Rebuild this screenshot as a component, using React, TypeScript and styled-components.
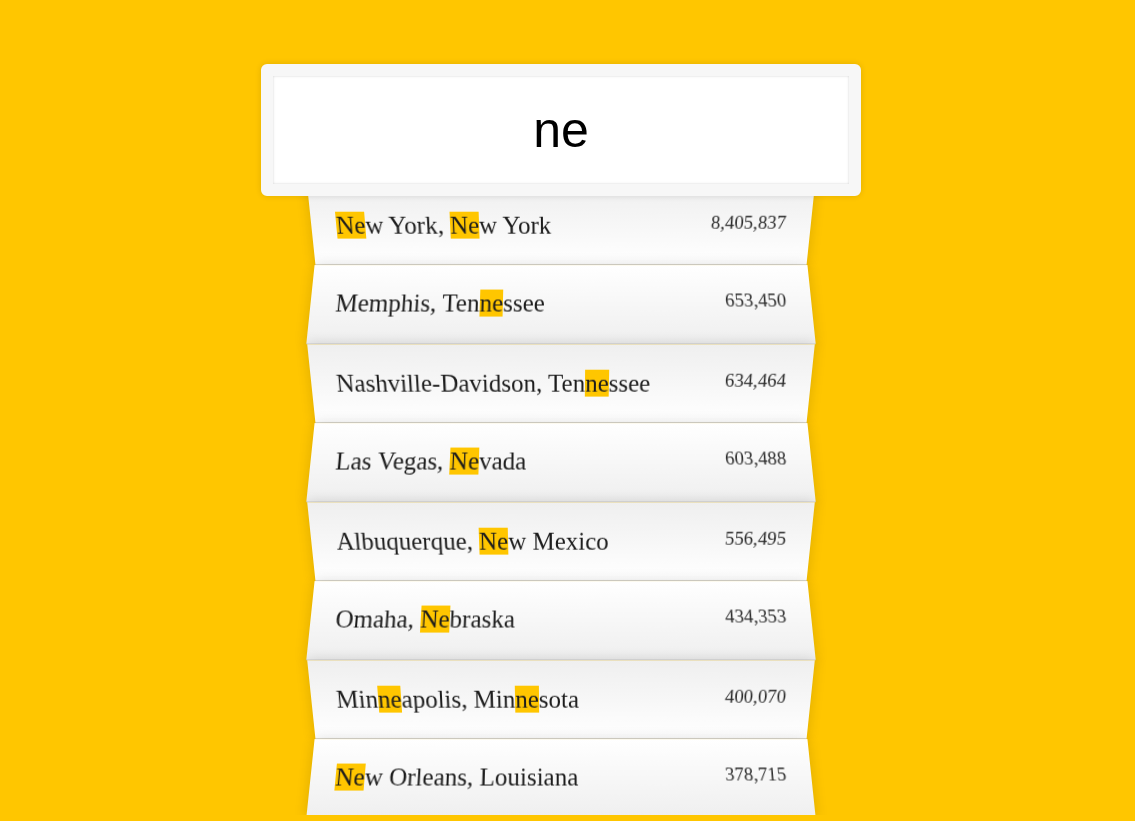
import React from 'react'
import styled, { createGlobalStyle, css } from 'styled-components'

const GlobalStyle = createGlobalStyle`
  html {
    box-sizing: border-box;
    background: #ffc600;
    overflow: hidden;
  }
  *, *:before, *:after {
    box-sizing: inherit;
  }
  body {
    margin: 0;
    font-family: "Liberation Serif", "Times New Roman", serif;
    font-size: 25px;
    color: #1c1c1c;
  }
`

const Page = styled.div`
  padding-right: 13px;
  padding-top: 63.5px;
`

const SearchForm = styled.form`
  width: 500px;
  margin: 0 auto;
`

const SearchInput = styled.input`
  position: relative;
  z-index: 2;
  display: block;
  width: 120%;
  margin: 0 0 -12.5px -10%;
  padding: 25px;
  text-align: center;
  outline: 0;
  border: 12.5px solid #f7f7f7;
  border-radius: 6px;
  font-family: "Liberation Sans", Arial, sans-serif;
  font-size: 50px;
  color: #000;
  background: #fff;
  box-shadow: 0 0 6px rgba(0, 0, 0, 0.12), inset 0 0 2.5px rgba(0, 0, 0, 0.19);
`

const Suggestions = styled.ul`
  margin: 0;
  padding: 0;
  position: relative;
`

const Suggestion = styled.li<{ $even: boolean }>`
  list-style: none;
  border-bottom: 1.25px solid #d8d8d8;
  box-shadow: 0 0 12.5px rgba(0, 0, 0, 0.14);
  margin: 0;
  padding: 25px;
  display: flex;
  justify-content: space-between;
  text-transform: capitalize;
  ${(p) =>
    p.$even
      ? css`
          transform: perspective(125px) rotateX(3deg) translateY(2.5px) scale(1.001);
          background: linear-gradient(to bottom, #ffffff 0%, #efefef 100%);
        `
      : css`
          transform: perspective(125px) rotateX(-3deg) translateY(3.75px);
          background: linear-gradient(to top, #ffffff 0%, #efefef 100%);
        `}
`

const Population = styled.span`
  font-size: 18.75px;
  color: #2a2a2a;
`

const Hl = styled.span`
  background: #ffc600;
`

const cities = [
  { city: 'New York', state: 'New York', population: '8405837' },
  { city: 'Memphis', state: 'Tennessee', population: '653450' },
  { city: 'Nashville-Davidson', state: 'Tennessee', population: '634464' },
  { city: 'Las Vegas', state: 'Nevada', population: '603488' },
  { city: 'Albuquerque', state: 'New Mexico', population: '556495' },
  { city: 'Omaha', state: 'Nebraska', population: '434353' },
  { city: 'Minneapolis', state: 'Minnesota', population: '400070' },
  { city: 'New Orleans', state: 'Louisiana', population: '378715' },
]

const query = 'ne'

function numberWithCommas(x: string) {
  return x.replace(/\B(?=(\d{3})+(?!\d))/g, ',')
}

function highlight(text: string) {
  const parts = text.split(new RegExp(`(${query})`, 'gi'))
  return parts.map((part, i) =>
    part.toLowerCase() === query ? <Hl key={i}>{part}</Hl> : <React.Fragment key={i}>{part}</React.Fragment>
  )
}

export default function App() {
  return (
    <Page>
      <GlobalStyle />
      <SearchForm onSubmit={(e) => e.preventDefault()}>
        <SearchInput type="text" defaultValue={query} placeholder="City or State" />
        <Suggestions>
          {cities.map((place, i) => (
            <Suggestion key={place.city} $even={i % 2 === 1}>
              <span>
                {highlight(place.city)}, {highlight(place.state)}
              </span>
              <Population>{numberWithCommas(place.population)}</Population>
            </Suggestion>
          ))}
        </Suggestions>
      </SearchForm>
    </Page>
  )
}
